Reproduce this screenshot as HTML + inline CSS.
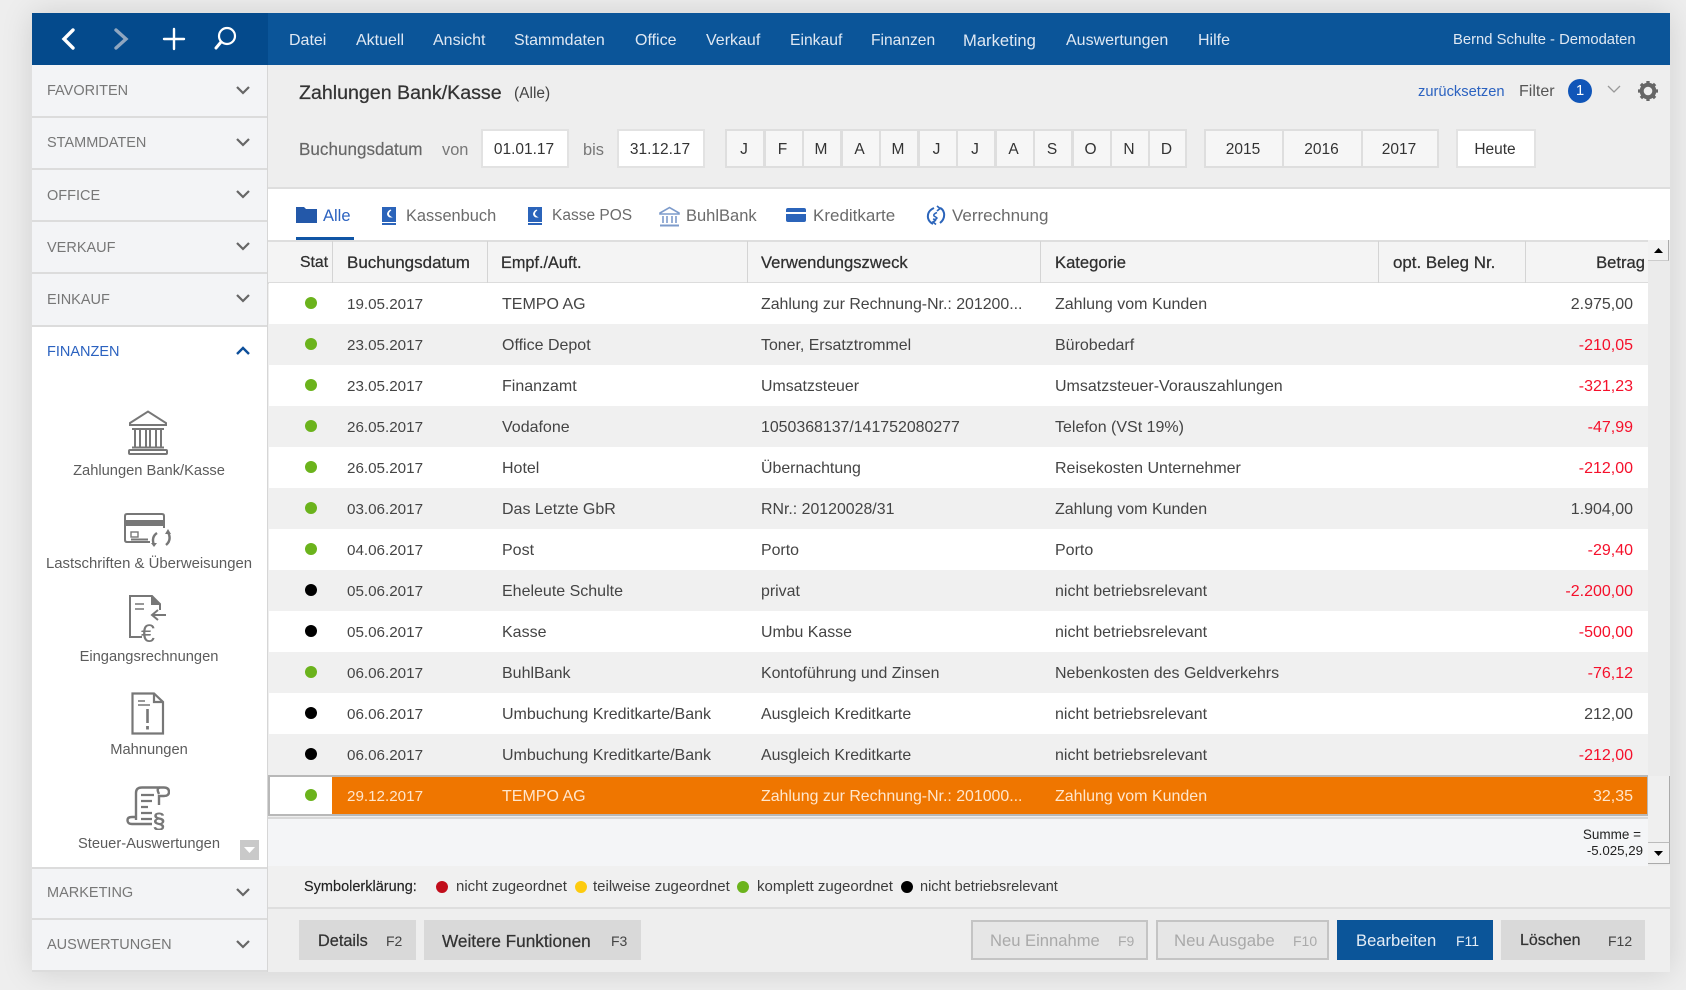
<!DOCTYPE html>
<html lang="de"><head><meta charset="utf-8"><title>Zahlungen Bank/Kasse</title>
<style>
html,body{margin:0;padding:0;width:1686px;height:990px;overflow:hidden;background:#eeeeee}
body{font-family:"Liberation Sans",sans-serif;position:relative}
#app,#app div,#app span,#app svg{position:absolute}
#app{left:32px;top:13px;width:1638px;height:959px;background:#eee;box-shadow:0 0 30px rgba(0,0,0,.13);overflow:hidden;filter:blur(.3px)}
#w{left:-32px;top:-13px;width:1686px;height:990px}
.t{white-space:nowrap;line-height:20px;height:20px}
.n{top:31px;color:#dfe8f3;font-size:16px}
.sb{left:32px;width:235px;height:50px;background:#f3f4f6;border-bottom:2px solid #dcdcdc}
.sb span{left:15px;top:16px;font-size:14.5px;line-height:20px;color:#777;white-space:nowrap}
.sb svg{left:203px;top:19px}
.il{left:32px;width:234px;text-align:center;font-size:14.7px;color:#5c5c5c;line-height:20px;white-space:nowrap}
.box{background:#f6f6f6;border:2px solid #dedede;box-sizing:border-box;text-align:center;font-size:15.5px;color:#333;line-height:38px;height:39px;top:129px;padding-right:2px}
.tab{top:206px;font-size:16.5px;color:#6b6b6b;line-height:20px;white-space:nowrap}
.h{top:253px;font-size:16.6px;color:#2f2f2f;line-height:20px;white-space:nowrap;-webkit-text-stroke:.25px #2f2f2f}
.v{top:241px;width:1px;height:42px;background:#d4d4d4}
.r{left:269px;width:1379px;height:41px;line-height:41px;font-size:16px;color:#444;white-space:nowrap}
.r.g{background:#f0f0f0}.r.w{background:#fff}
.r span{top:1px}
.r i{position:absolute;left:36px;top:14px;width:12px;height:12px;border-radius:50%;background:#6bb31c}
.r i.b{background:#000}
.r .a{left:78px;font-size:15.2px}.r .b1{left:233px}.r .c{left:492px;font-size:15.9px}.r .d{left:786px}
.r .e{right:15px}.r .m{color:#f5102b}
.lg{top:877px;font-size:15px;color:#3d3d3d;line-height:20px;white-space:nowrap}
.ld{top:881px;width:12px;height:12px;border-radius:50%}
.btn{top:920px;height:40px;background:#d9d9d9;box-sizing:border-box}
.btx{top:931px;font-size:16.3px;line-height:20px;color:#333;white-space:nowrap;-webkit-text-stroke:.25px #333}
.bf{top:931px;font-size:14px;line-height:20px;color:#444;white-space:nowrap}
.dis{background:#e6e6e6;border:2px solid #c4c4c4}
</style></head><body>
<div id="app"><div id="w">

<!-- top bar -->
<div style="left:32px;top:13px;width:236px;height:52px;background:#044a8c"></div>
<div style="left:268px;top:13px;width:1402px;height:52px;background:#0b5599"></div>
<svg style="left:60px;top:26px" width="180" height="26" viewBox="0 0 180 26" fill="none" stroke-linecap="round">
<path d="M13 4 L4 13 L13 22" stroke="#fff" stroke-width="3.4"/>
<path d="M56 4 L66 13 L56 22" stroke="#8fa6c0" stroke-width="3.4"/>
<path d="M114 3 V23 M104 13 H124" stroke="#fff" stroke-width="2.4"/>
<circle cx="167" cy="10" r="8" stroke="#fff" stroke-width="2.2"/><path d="M161 16 L156 22" stroke="#fff" stroke-width="3"/>
</svg>
<span class="t n" style="left:289px">Datei</span>
<span class="t n" style="left:356px">Aktuell</span>
<span class="t n" style="left:433px">Ansicht</span>
<span class="t n" style="left:514px">Stammdaten</span>
<span class="t n" style="left:635px">Office</span>
<span class="t n" style="left:706px">Verkauf</span>
<span class="t n" style="left:790px;font-size:15.7px">Einkauf</span>
<span class="t n" style="left:871px;font-size:15.6px">Finanzen</span>
<span class="t n" style="left:963px;font-size:16.6px">Marketing</span>
<span class="t n" style="left:1066px">Auswertungen</span>
<span class="t n" style="left:1198px">Hilfe</span>
<span class="t n" style="left:1453px;top:30px;font-size:14.8px">Bernd Schulte - Demodaten</span>

<!-- sidebar -->
<div style="left:32px;top:65px;width:236px;height:907px;background:#fff;border-right:1px solid #d6d6d6;box-sizing:border-box"></div>
<div class="sb" style="top:65px;height:51px"><span>FAVORITEN</span><svg style="top:20px" width="16" height="10" viewBox="0 0 16 10"><path d="M2 2 L8 8 L14 2" fill="none" stroke="#666" stroke-width="2.2"/></svg></div>
<div class="sb" style="top:118px"><span style="top:15px">STAMMDATEN</span><svg width="16" height="10" viewBox="0 0 16 10"><path d="M2 2 L8 8 L14 2" fill="none" stroke="#666" stroke-width="2.2"/></svg></div>
<div class="sb" style="top:170px"><span>OFFICE</span><svg width="16" height="10" viewBox="0 0 16 10"><path d="M2 2 L8 8 L14 2" fill="none" stroke="#666" stroke-width="2.2"/></svg></div>
<div class="sb" style="top:222px"><span>VERKAUF</span><svg width="16" height="10" viewBox="0 0 16 10"><path d="M2 2 L8 8 L14 2" fill="none" stroke="#666" stroke-width="2.2"/></svg></div>
<div class="sb" style="top:274px;height:51px"><span>EINKAUF</span><svg width="16" height="10" viewBox="0 0 16 10"><path d="M2 2 L8 8 L14 2" fill="none" stroke="#666" stroke-width="2.2"/></svg></div>
<span class="t" style="left:47px;top:342px;font-size:14.5px;color:#2b62c0">FINANZEN</span>
<svg style="left:235px;top:346px" width="16" height="10" viewBox="0 0 16 10"><path d="M2 8 L8 2 L14 8" fill="none" stroke="#0d4f9a" stroke-width="2.4"/></svg>

<svg style="left:128px;top:410px" width="40" height="45" viewBox="0 0 40 45" fill="none" stroke="#777" stroke-width="2">
<path d="M2 13 L20 1.5 L38 13 V15 H2 Z"/><path d="M4 19 H36" />
<path d="M7 19 V37 M12 19 V37 M18 19 V37 M22 19 V37 M28 19 V37 M33 19 V37 M4 37.5 H36"/><rect x="1" y="40" width="38" height="4" rx="1"/></svg>
<div class="il" style="top:461px">Zahlungen Bank/Kasse</div>

<svg style="left:124px;top:513px" width="48" height="35" viewBox="0 0 48 35" fill="none" stroke="#777" stroke-width="2">
<path d="M26 29 H3 Q1 29 1 27 V3 Q1 1 3 1 H38 Q40 1 40 3 V15"/><rect x="1" y="7" width="39" height="6" fill="#777" stroke="none"/>
<rect x="7" y="19" width="7" height="5" stroke-width="1.4"/><path d="M7 26.500 H24" />
<path d="M33 20 Q27 24 30 32" stroke-width="2.4"/><path d="M27 30 L30 34 L33 30 Z" fill="#777" stroke="none"/>
<path d="M42 32 Q48 27 44 19" stroke-width="2.4"/><path d="M41 21 L44 16 L47 21 Z" fill="#777" stroke="none"/></svg>
<div class="il" style="top:554px;font-size:14.9px">Lastschriften &amp; Überweisungen</div>

<svg style="left:128px;top:594px" width="40" height="50" viewBox="0 0 40 50" fill="none" stroke="#777" stroke-width="2">
<path d="M14 43 H2 V2 H24 L32 10 V16"/><path d="M24 2 V10 H32" fill="#777"/><path d="M7 10 H16 M7 15 H16" stroke-width="1.6"/>
<path d="M38 21 H25 M30 16 L24 21 L30 26"/>
<text x="13" y="48" font-family="Liberation Sans" font-size="25" fill="#777" stroke="none">€</text></svg>
<div class="il" style="top:647px">Eingangsrechnungen</div>

<svg style="left:131px;top:692px" width="34" height="43" viewBox="0 0 34 43" fill="none" stroke="#777" stroke-width="2.2">
<path d="M1.5 1.5 H23 L32 10 V41.5 H1.5 Z"/><path d="M23 2 V10 H32"/><path d="M7 9 H14 M7 13 H19" stroke-width="1.6"/>
<path d="M16.500 17 V31" stroke-width="2.6"/><path d="M16.500 34 V37.500" stroke-width="2.8"/></svg>
<div class="il" style="top:740px">Mahnungen</div>

<svg style="left:126px;top:786px" width="44" height="44" viewBox="0 0 44 44" fill="none" stroke="#777" stroke-width="2.4">
<path d="M10 34 V7 Q10 1.500 16 1.500 H38 Q43 1.500 43 6 Q43 10 38 10 H33 V19"/><path d="M34 1.500 Q30 2 33 8"/>
<path d="M15 9 H28 M15 15 H26 M15 21 H22 M15 27 H26 M15 33 H26" stroke-width="2.2"/>
<path d="M26 38 H6 Q1.500 38 1.500 34 Q1.500 31 6 31 H10"/>
<text x="27" y="42" font-family="Liberation Sans" font-size="22" font-weight="bold" fill="#777" stroke="none">§</text></svg>
<div class="il" style="top:834px">Steuer-Auswertungen</div>
<div style="left:240px;top:840px;width:19px;height:20px;background:#c9c9c9"></div>
<svg style="left:244px;top:846px" width="12" height="8" viewBox="0 0 12 8"><path d="M0 1 H11 L5.500 7 Z" fill="#fff"/></svg>

<div class="sb" style="left:32px;top:867px;border-top:2px solid #dcdcdc;height:49px"><span style="top:14px">MARKETING</span><svg style="top:18px" width="16" height="10" viewBox="0 0 16 10"><path d="M2 2 L8 8 L14 2" fill="none" stroke="#666" stroke-width="2.2"/></svg></div>
<div class="sb" style="top:918px;border-top:2px solid #dcdcdc;height:50px"><span style="top:15px">AUSWERTUNGEN</span><svg style="top:19px" width="16" height="10" viewBox="0 0 16 10"><path d="M2 2 L8 8 L14 2" fill="none" stroke="#666" stroke-width="2.2"/></svg></div>

<!-- title + filter band -->
<div style="left:268px;top:65px;width:1402px;height:124px;background:#eee;border-bottom:2px solid #dedede;box-sizing:border-box"></div>
<span class="t" style="left:299px;top:81px;font-size:19.6px;line-height:24px;height:24px;color:#333;-webkit-text-stroke:.25px #333">Zahlungen Bank/Kasse</span>
<span class="t" style="left:514px;top:84px;font-size:15.5px;color:#444">(Alle)</span>
<span class="t" style="left:1418px;top:82px;font-size:14.7px;color:#2b62c0">zurücksetzen</span>
<span class="t" style="left:1519px;top:82px;font-size:16px;color:#555">Filter</span>
<div style="left:1568px;top:79px;width:24px;height:24px;border-radius:50%;background:#1055b8;color:#fff;font-size:15px;line-height:24px;text-align:center">1</div>
<svg style="left:1607px;top:85px" width="14" height="9" viewBox="0 0 14 9"><path d="M1 1 L7 7 L13 1" fill="none" stroke="#999" stroke-width="1.3"/></svg>
<svg style="left:1637px;top:80px" width="22" height="22" viewBox="0 0 22 22"><circle cx="11" cy="11" r="6.300" fill="none" stroke="#666" stroke-width="4"/><path d="M11 1 V4 M11 18 V21 M1 11 H4 M18 11 H21 M3.900 3.900 L6 6 M16 16 L18.100 18.100 M18.100 3.900 L16 6 M6 16 L3.900 18.100" stroke="#666" stroke-width="3.300"/></svg>

<span class="t" style="left:299px;top:140px;font-size:17.1px;color:#666;-webkit-text-stroke:.15px #666">Buchungsdatum</span>
<span class="t" style="left:442px;top:140px;font-size:16.4px;color:#777">von</span>
<div class="box" style="left:481px;width:88px;background:#fff;border-color:#e2e2e2">01.01.17</div>
<span class="t" style="left:583px;top:140px;font-size:16.4px;color:#777">bis</span>
<div class="box" style="left:617px;width:88px;background:#fff;border-color:#e2e2e2">31.12.17</div>
<div class="box" style="left:725px;width:40px">J</div>
<div class="box" style="left:763.500px;width:40px">F</div>
<div class="box" style="left:802px;width:40px">M</div>
<div class="box" style="left:840.500px;width:40px">A</div>
<div class="box" style="left:879px;width:40px">M</div>
<div class="box" style="left:917.500px;width:40px">J</div>
<div class="box" style="left:956px;width:40px">J</div>
<div class="box" style="left:994.500px;width:40px">A</div>
<div class="box" style="left:1033px;width:40px">S</div>
<div class="box" style="left:1071.500px;width:40px">O</div>
<div class="box" style="left:1110px;width:40px">N</div>
<div class="box" style="left:1148px;width:39px">D</div>
<div class="box" style="left:1204px;width:80px">2015</div>
<div class="box" style="left:1282px;width:81px">2016</div>
<div class="box" style="left:1361px;width:78px">2017</div>
<div class="box" style="left:1456px;width:80px;background:#fff;border-color:#e2e2e2">Heute</div>

<!-- tabs -->
<div style="left:268px;top:189px;width:1402px;height:51px;background:#fff"></div>
<svg style="left:296px;top:206px" width="21" height="18" viewBox="0 0 21 18"><path d="M0 1 H8 L10 3 H21 V17 H0 Z" fill="#2358a9"/></svg>
<span class="tab" style="left:323px;color:#2b62c0">Alle</span>
<div style="left:296px;top:237px;width:58px;height:3px;background:#1055a5"></div>
<svg style="left:381px;top:206px" width="16" height="20" viewBox="0 0 16 20"><path d="M1 1 H15 V16 H1 Z" fill="#2b64ba"/><path d="M10 4 Q5 8 10 11 Q7 11 6.500 8 Q7 5 10 4 Z" fill="#fff" stroke="#fff"/><path d="M1 18 H15" stroke="#2b64ba" stroke-width="2"/></svg>
<span class="tab" style="left:406px;font-size:16.4px">Kassenbuch</span>
<svg style="left:527px;top:206px" width="16" height="20" viewBox="0 0 16 20"><path d="M1 1 H15 V16 H1 Z" fill="#2b64ba"/><path d="M10 4 Q5 8 10 11 Q7 11 6.500 8 Q7 5 10 4 Z" fill="#fff" stroke="#fff"/><path d="M1 18 H15" stroke="#2b64ba" stroke-width="2"/></svg>
<span class="tab" style="left:552px;font-size:15.5px">Kasse POS</span>
<svg style="left:659px;top:206px" width="21" height="21" viewBox="0 0 21 21" fill="none" stroke="#7d9bcb" stroke-width="1.600"><path d="M1 7 L10.500 1.500 L20 7 V8 H1 Z"/><path d="M4 10 V17 M8 10 V17 M13 10 V17 M17 10 V17"/><path d="M1 19.500 H20" stroke-width="2"/></svg>
<span class="tab" style="left:686px">BuhlBank</span>
<svg style="left:786px;top:207px" width="20" height="16" viewBox="0 0 20 16"><rect x="0" y="1" width="20" height="14" rx="2" fill="#2b64ba"/><rect x="0" y="5" width="20" height="2" fill="#fff"/></svg>
<span class="tab" style="left:813px;font-size:17px">Kreditkarte</span>
<svg style="left:925px;top:205px" width="21" height="21" viewBox="0 0 21 21" fill="none" stroke="#2b64ba" stroke-width="2"><path d="M9 3 Q2 6 3 13 Q4 17 8 19"/><path d="M15 18 Q20 14 19 8 Q18 4 15 3"/><path d="M12 1 L15 3.500 L12 6 M11 19.500 L8 17 L11 15" stroke-width="1.700"/><path d="M12 7.500 Q8 9 9 11 Q11 12 12 13 Q11 15 8 14" stroke-width="1.500"/></svg>
<span class="tab" style="left:952px;font-size:17px">Verrechnung</span>

<!-- table header -->
<div style="left:268px;top:240px;width:1380px;height:44px;background:#f4f4f4;border-top:2px solid #dedede;border-bottom:2px solid #dcdcdc;box-sizing:border-box"></div>
<span class="h" style="left:300px;font-size:15.800px">Stat</span><div class="v" style="left:332px"></div>
<span class="h" style="left:347px;font-size:17px">Buchungsdatum</span><div class="v" style="left:487px"></div>
<span class="h" style="left:501px;font-size:16.300px;top:253px">Empf./Auft.</span><div class="v" style="left:747px"></div>
<span class="h" style="left:761px">Verwendungszweck</span><div class="v" style="left:1040px"></div>
<span class="h" style="left:1055px">Kategorie</span><div class="v" style="left:1378px"></div>
<span class="h" style="left:1393px;font-size:16.900px">opt. Beleg Nr.</span><div class="v" style="left:1525px"></div>
<span class="h" style="right:41px">Betrag</span>

<!-- rows -->
<div class="r w" style="top:283px"><i></i><span class="a">19.05.2017</span><span class="b1">TEMPO AG</span><span class="c">Zahlung zur Rechnung-Nr.: 201200...</span><span class="d">Zahlung vom Kunden</span><span class="e">2.975,00</span></div>
<div class="r g" style="top:324px"><i></i><span class="a">23.05.2017</span><span class="b1">Office Depot</span><span class="c">Toner, Ersatztrommel</span><span class="d">Bürobedarf</span><span class="e m">-210,05</span></div>
<div class="r w" style="top:365px"><i></i><span class="a">23.05.2017</span><span class="b1">Finanzamt</span><span class="c">Umsatzsteuer</span><span class="d">Umsatzsteuer-Vorauszahlungen</span><span class="e m">-321,23</span></div>
<div class="r g" style="top:406px"><i></i><span class="a">26.05.2017</span><span class="b1">Vodafone</span><span class="c">1050368137/141752080277</span><span class="d">Telefon (VSt 19%)</span><span class="e m">-47,99</span></div>
<div class="r w" style="top:447px"><i></i><span class="a">26.05.2017</span><span class="b1">Hotel</span><span class="c">Übernachtung</span><span class="d">Reisekosten Unternehmer</span><span class="e m">-212,00</span></div>
<div class="r g" style="top:488px"><i></i><span class="a">03.06.2017</span><span class="b1">Das Letzte GbR</span><span class="c">RNr.: 20120028/31</span><span class="d">Zahlung vom Kunden</span><span class="e">1.904,00</span></div>
<div class="r w" style="top:529px"><i></i><span class="a">04.06.2017</span><span class="b1">Post</span><span class="c">Porto</span><span class="d">Porto</span><span class="e m">-29,40</span></div>
<div class="r g" style="top:570px"><i class="b"></i><span class="a">05.06.2017</span><span class="b1">Eheleute Schulte</span><span class="c">privat</span><span class="d">nicht betriebsrelevant</span><span class="e m">-2.200,00</span></div>
<div class="r w" style="top:611px"><i class="b"></i><span class="a">05.06.2017</span><span class="b1">Kasse</span><span class="c">Umbu Kasse</span><span class="d">nicht betriebsrelevant</span><span class="e m">-500,00</span></div>
<div class="r g" style="top:652px"><i></i><span class="a">06.06.2017</span><span class="b1">BuhlBank</span><span class="c">Kontoführung und Zinsen</span><span class="d">Nebenkosten des Geldverkehrs</span><span class="e m">-76,12</span></div>
<div class="r w" style="top:693px"><i class="b"></i><span class="a">06.06.2017</span><span class="b1">Umbuchung Kreditkarte/Bank</span><span class="c">Ausgleich Kreditkarte</span><span class="d">nicht betriebsrelevant</span><span class="e">212,00</span></div>
<div class="r g" style="top:734px"><i class="b"></i><span class="a">06.06.2017</span><span class="b1">Umbuchung Kreditkarte/Bank</span><span class="c">Ausgleich Kreditkarte</span><span class="d">nicht betriebsrelevant</span><span class="e m">-212,00</span></div>

<!-- selected -->
<div style="left:268px;top:775px;width:1380px;height:41px;background:#fff;border:2px solid #b8b8b8;box-sizing:border-box"></div>
<div style="left:332px;top:777px;width:1315px;height:37px;background:#ef7600"></div>
<div class="r" style="top:775px;color:#ffe6cc"><i></i><span class="a">29.12.2017</span><span class="b1">TEMPO AG</span><span class="c">Zahlung zur Rechnung-Nr.: 201000...</span><span class="d">Zahlung vom Kunden</span><span class="e">32,35</span></div>

<div style="left:268px;top:816px;width:1380px;height:49px;background:#f4f5f7;border-top:2px solid #d8d8d8;border-bottom:2px solid #d4d4d4;box-sizing:content-box;margin-top:1px"></div>
<span class="t" style="right:45px;top:826px;font-size:13.500px;line-height:18px;height:18px;color:#222">Summe =</span>
<span class="t" style="right:43px;top:842px;font-size:13.300px;line-height:18px;height:18px;color:#222">-5.025,29</span>

<!-- scrollbar -->
<div style="left:1648px;top:240px;width:22px;height:625px;background:#ebebeb"></div>
<div style="left:1648px;top:240px;width:21px;height:21px;background:#f2f2f2;border-right:1px solid #aaa;border-bottom:1px solid #ccc;box-sizing:border-box"></div>
<svg style="left:1653px;top:247px" width="12" height="7"><path d="M1 6 H10 L5.500 1 Z" fill="#000"/></svg>
<div style="left:1648px;top:776px;width:22px;height:66px;background:#efefef;border-right:1px solid #aaa;box-sizing:border-box"></div>
<div style="left:1648px;top:842px;width:22px;height:22px;background:#f2f2f2;border-top:1px solid #bbb;border-right:1px solid #aaa;border-bottom:1px solid #aaa;box-sizing:border-box"></div>
<svg style="left:1653px;top:850px" width="12" height="7"><path d="M1 1 H10 L5.500 6 Z" fill="#000"/></svg>

<!-- legend -->
<div style="left:268px;top:866px;width:1402px;height:43px;background:#f0f0f0;border-bottom:2px solid #dedede;box-sizing:border-box"></div>
<span class="lg" style="left:304px;color:#222;font-size:14.500px;-webkit-text-stroke:.15px #222">Symbolerklärung:</span>
<div class="ld" style="left:436px;background:#c10d1b"></div><span class="lg" style="left:456px">nicht zugeordnet</span>
<div class="ld" style="left:575px;background:#fdcb0e"></div><span class="lg" style="left:593px">teilweise zugeordnet</span>
<div class="ld" style="left:737px;background:#6bb31c"></div><span class="lg" style="left:757px">komplett zugeordnet</span>
<div class="ld" style="left:901px;background:#000"></div><span class="lg" style="left:920px;font-size:14.500px">nicht betriebsrelevant</span>

<!-- buttons -->
<div style="left:268px;top:909px;width:1402px;height:63px;background:#eee"></div>
<div class="btn" style="left:299px;width:117px"></div><span class="btx" style="left:318px">Details</span><span class="bf" style="left:386px">F2</span>
<div class="btn" style="left:424px;width:217px"></div><span class="btx" style="left:442px;font-size:17.200px">Weitere Funktionen</span><span class="bf" style="left:611px">F3</span>
<div class="btn dis" style="left:971px;width:177px"></div><span class="btx" style="left:990px;color:#a9a9a9;-webkit-text-stroke:0;font-size:16.600px">Neu Einnahme</span><span class="bf" style="left:1118px;color:#aaa">F9</span>
<div class="btn dis" style="left:1156px;width:173px"></div><span class="btx" style="left:1174px;color:#a9a9a9;-webkit-text-stroke:0;font-size:16.800px">Neu Ausgabe</span><span class="bf" style="left:1293px;color:#aaa">F10</span>
<div class="btn" style="left:1337px;width:156px;background:#0b5599"></div><span class="btx" style="left:1356px;color:#e4edf6;-webkit-text-stroke:0;font-size:16.600px">Bearbeiten</span><span class="bf" style="left:1456px;color:#e4edf6">F11</span>
<div class="btn" style="left:1501px;width:144px"></div><span class="btx" style="left:1520px;font-size:16px">Löschen</span><span class="bf" style="left:1608px">F12</span>

</div></div>
</body></html>
